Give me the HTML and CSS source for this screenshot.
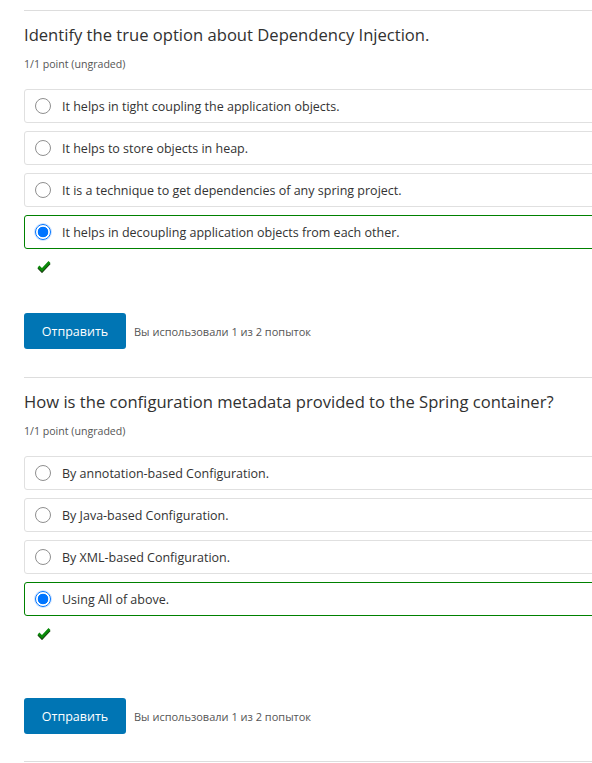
FILE: index.html
```html
<!DOCTYPE html>
<html>
<head>
<meta charset="utf-8">
<link rel="stylesheet" href="styles.css">
</head>
<body>
<div class="page">
  <section class="problem">
    <h3 class="title">Identify the true option about Dependency Injection.</h3>
    <div class="points">1/1 point (ungraded)</div>
    <div class="options">
      <label class="option"><span class="radio"></span><span>It helps in tight coupling the application objects.</span></label>
      <label class="option"><span class="radio"></span><span>It helps to store objects in heap.</span></label>
      <label class="option"><span class="radio"></span><span>It is a technique to get dependencies of any spring project.</span></label>
      <label class="option correct"><span class="radio checked"></span><span>It helps in decoupling application objects from each other.</span></label>
    </div>
    <div class="status"><svg width="14" height="12" viewBox="0 0 14 12"><path d="M1.5 6.5 L5 10 L12.5 2" fill="none" stroke="#1b3d12" stroke-width="3"/><path d="M1.5 5.5 L5 9 L12.5 1" fill="none" stroke="#0a8a0a" stroke-width="2.6"/></svg></div>
    <div class="actions">
      <button class="submit">Отправить</button>
      <span class="attempts">Вы использовали 1 из 2 попыток</span>
    </div>
  </section>
  <section class="problem">
    <h3 class="title">How is the configuration metadata provided to the Spring container?</h3>
    <div class="points">1/1 point (ungraded)</div>
    <div class="options">
      <label class="option"><span class="radio"></span><span>By annotation-based Configuration.</span></label>
      <label class="option"><span class="radio"></span><span>By Java-based Configuration.</span></label>
      <label class="option"><span class="radio"></span><span>By XML-based Configuration.</span></label>
      <label class="option correct"><span class="radio checked"></span><span>Using All of above.</span></label>
    </div>
    <div class="status"><svg width="14" height="12" viewBox="0 0 14 12"><path d="M1.5 6.5 L5 10 L12.5 2" fill="none" stroke="#1b3d12" stroke-width="3"/><path d="M1.5 5.5 L5 9 L12.5 1" fill="none" stroke="#0a8a0a" stroke-width="2.6"/></svg></div>
    <div class="actions tall">
      <button class="submit">Отправить</button>
      <span class="attempts">Вы использовали 1 из 2 попыток</span>
    </div>
  </section>
  <div class="end-line"></div>
</div>
</body>
</html>
```

FILE: styles.css
```css
html, body {
  margin: 0;
  padding: 0;
  background: #fff;
  overflow: hidden;
}
body {
  font-family: "Open Sans", "Noto Sans", sans-serif;
  color: #333;
}
.page {
  padding: 10px 0 0 24px;
  width: 600px;
}
.problem {
  border-top: 1px solid #ddd;
  padding-top: 12px;
}
.title {
  margin: 0;
  font-size: 16.6px;
  font-weight: 400;
  line-height: 24px;
  color: #313131;
}
.points {
  margin-top: 9px;
  font-size: 10.6px;
  line-height: 16px;
  color: #555;
}
.options {
  margin-top: 17px;
  display: flex;
  flex-direction: column;
  gap: 8px;
}
.option {
  display: flex;
  align-items: center;
  height: 32px;
  border: 1px solid #e0e0e0;
  border-radius: 3px 0 0 3px;
  padding-left: 10px;
  font-size: 12.5px;
  color: #333;
}
.option.correct {
  border-color: #008100;
}
.radio {
  width: 16px;
  height: 16px;
  border: 1px solid #8f8f8f;
  border-radius: 50%;
  box-sizing: border-box;
  margin-right: 11px;
  flex: none;
  background: #fff;
}
.radio.checked {
  border: 1px solid #0075ff;
  background: radial-gradient(circle, #0075ff 0 5px, #fff 5.6px);
  box-shadow: 0 0 0 1px #cfe3ff;
}
.status {
  height: 30px;
  padding-left: 13px;
  padding-top: 12px;
  box-sizing: border-box;
}
.status svg { display: block; }
.actions {
  margin-top: 34px;
  display: flex;
  align-items: center;
  gap: 8px;
  padding-bottom: 28px;
}
.actions.tall {
  margin-top: 52px;
  padding-bottom: 27px;
}
.submit {
  width: 102px;
  height: 36px;
  border: none;
  border-radius: 3px;
  background: #0075b4;
  color: #fff;
  font-family: "Open Sans", "Noto Sans", sans-serif;
  font-size: 12.5px;
  padding: 0;
}
.attempts {
  font-size: 11px;
  color: #555;
}
.end-line {
  border-top: 1px solid #ddd;
}
```
